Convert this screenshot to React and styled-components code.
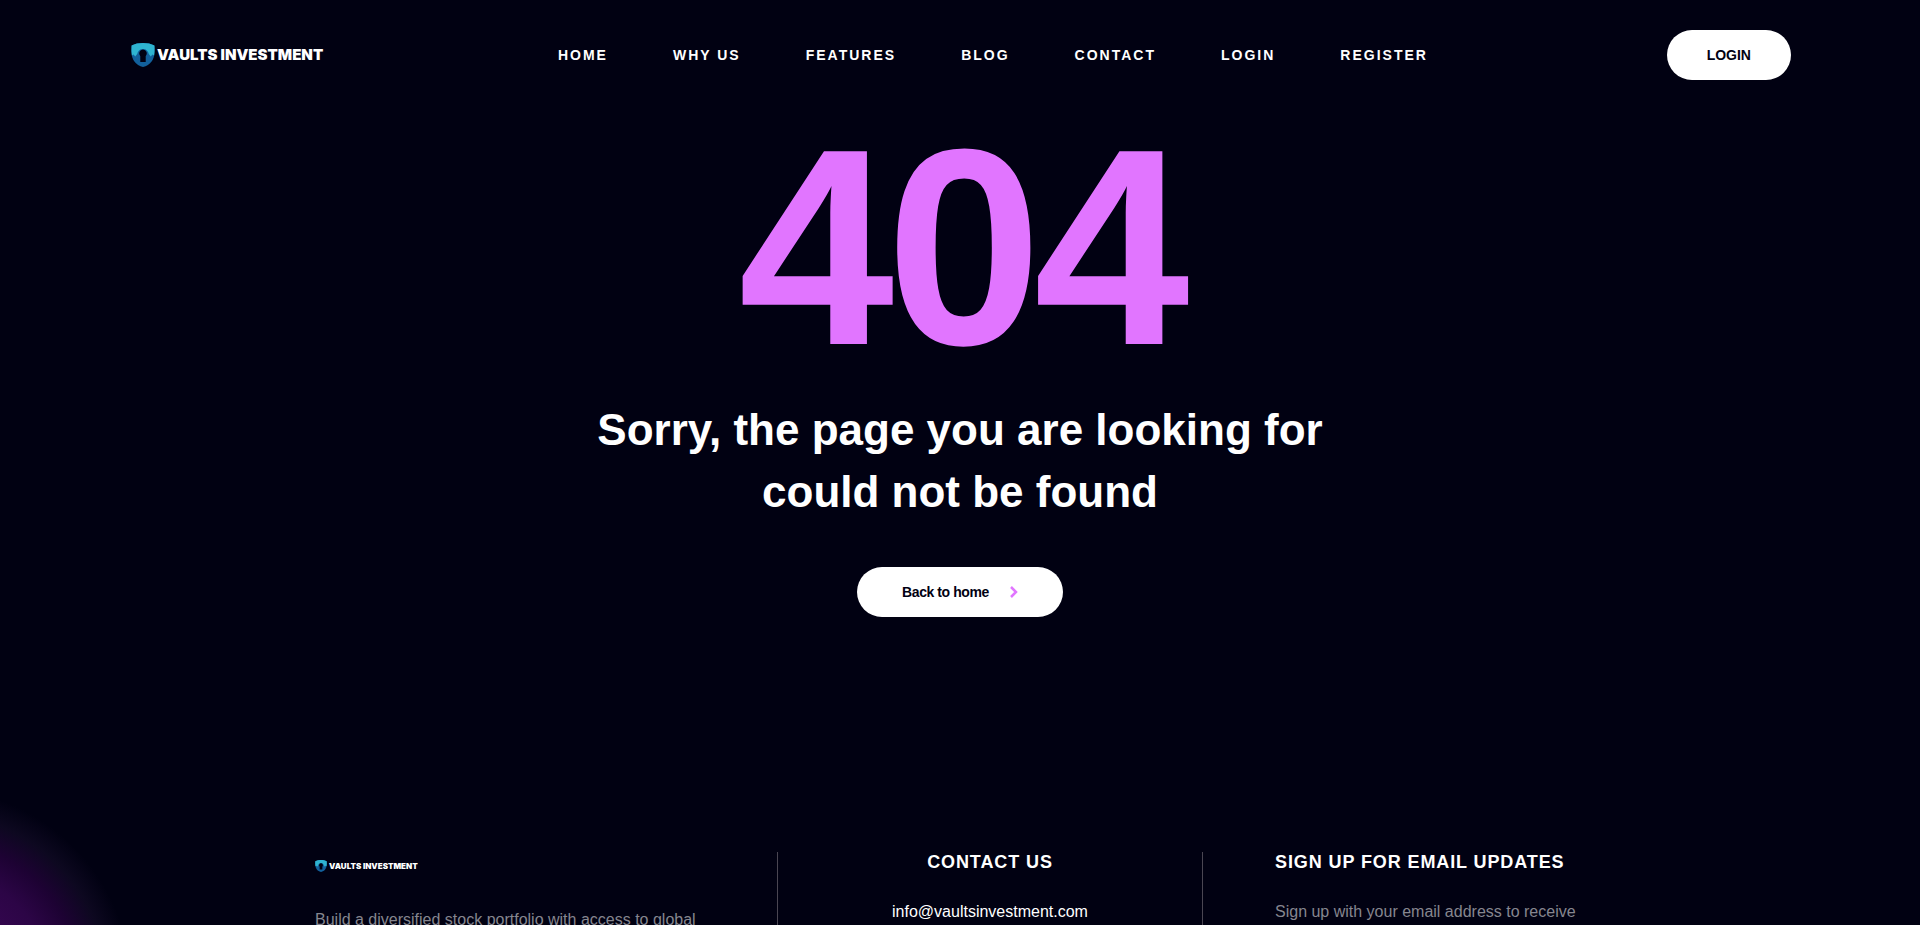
import styled, { createGlobalStyle } from 'styled-components';

const navItems = ['Home', 'Why us', 'Features', 'Blog', 'Contact', 'Login', 'Register'];

const Logo = ({ small }) => (
    <LogoLink href="#home" $small={small}>
        <svg viewBox="0 0 24 24" aria-hidden="true">
            <path d="M12 0C8 0 3.600 .8 .6 2.600C.2 8 .2 14 3 18C5.400 21.400 8.500 23.300 12 24C15.500 23.300 18.600 21.400 21 18C23.800 14 23.800 8 23.400 2.600C20.400 .8 16 0 12 0Z" fill="#12609c" />
            <path d="M12 0C8 0 3.600 .8 .6 2.600C.3 6.200 .4 9.500 .9 12.500L2.600 11.500L4.200 13.500L6.200 11C6.800 8 8.800 6 12 6C15.200 6 17.200 8 17.800 11L19.800 13.500L21.400 11.500L23.100 12.500C23.600 9.500 23.700 6.200 23.400 2.600C20.400 .8 16 0 12 0Z" fill="#2fb4d1" />
            <path d="M12 6.500A4 4 0 0 0 9.300 13.300V19H14.700V13.300A4 4 0 0 0 12 6.500Z" fill="#010112" />
        </svg>
        <span>VAULTS INVESTMENT</span>
    </LogoLink>
)

const Header = () => (
    <HeaderWrapper>
        <Logo />
        <Nav>
            {navItems.map((item) => (
                <NavLink key={item} href={`#${item.replace(' ', '-').toLowerCase()}`}>{item}</NavLink>
            ))}
        </Nav>
        <LoginButton type="button">LOGIN</LoginButton>
    </HeaderWrapper>
)

const NotFound = () => (
    <Hero>
        <ErrorCode>404</ErrorCode>
        <Message>Sorry, the page you are looking for could not be found</Message>
        <HomeLink href="#home">
            Back to home
            <svg width="8" height="12" viewBox="0 0 8 12" fill="none" aria-hidden="true">
                <path d="M1 1L6 6L1 11" stroke="#e175ff" strokeWidth="2.500" />
            </svg>
        </HomeLink>
    </Hero>
)

const Footer = () => (
    <FooterWrapper>
        <Columns>
            <About>
                <Logo small />
                <Text>Build a diversified stock portfolio with access to global</Text>
            </About>
            <Contact>
                <Title>Contact us</Title>
                <MailLink href="mailto:info@vaultsinvestment.com">info@vaultsinvestment.com</MailLink>
            </Contact>
            <SignUp>
                <Title>Sign up for email updates</Title>
                <Text>Sign up with your email address to receive</Text>
            </SignUp>
        </Columns>
    </FooterWrapper>
)

const App = () => {
    return (
        <>
            <GlobalStyle />
            <Header />
            <NotFound />
            <Footer />
        </>
    )
}

export default App


//Styled components
const GlobalStyle = createGlobalStyle`
    *, *::before, *::after {
        box-sizing: border-box;
    }

    body {
        margin: 0;
        background: #010112;
        color: #fff;
        font-family: "Liberation Sans", Arial, sans-serif;
        font-size: 16px;
        line-height: 28px;
    }

    h1, h2, h3, p {
        margin: 0;
    }

    a {
        color: inherit;
        text-decoration: none;
    }
`

const LogoLink = styled.a`
    display: inline-flex;
    align-items: center;
    gap: 2px;
    font-family: Inter, sans-serif;
    font-size: ${({ $small }) => ($small ? '8px' : '15px')};
    font-weight: 900;
    line-height: ${({ $small }) => ($small ? '12px' : '24px')};
    white-space: nowrap;

    svg {
        width: ${({ $small }) => ($small ? '12px' : '24px')};
        height: ${({ $small }) => ($small ? '12px' : '24px')};
    }
`

const HeaderWrapper = styled.header`
    display: flex;
    align-items: center;
    justify-content: space-between;
    padding: 30px 129px 0 131px;
`

const Nav = styled.nav`
    display: flex;
    gap: 65px;
    padding-right: 4px;
`

const NavLink = styled.a`
    font-size: 14px;
    font-weight: 700;
    letter-spacing: 2px;
    text-transform: uppercase;
`

const LoginButton = styled.button`
    height: 50px;
    padding: 0 40px;
    border: 0;
    border-radius: 25px;
    background: #fff;
    color: #010112;
    font: inherit;
    font-size: 14px;
    font-weight: 700;
    cursor: pointer;
`

const Hero = styled.main`
    display: flex;
    flex-direction: column;
    align-items: center;
    padding: 27px 20px 160px;
    text-align: center;
`

const ErrorCode = styled.h1`
    color: #e175ff;
    font-size: 280px;
    line-height: 280px;
    letter-spacing: -8px;
`

const Message = styled.h2`
    max-width: 780px;
    margin: 12px 0 44px;
    font-size: 44px;
    line-height: 62px;
`

const HomeLink = styled.a`
    display: inline-flex;
    align-items: center;
    gap: 21px;
    height: 50px;
    padding: 0 45px;
    border-radius: 25px;
    background: #fff;
    color: #010112;
    font-size: 14px;
    font-weight: 700;
    letter-spacing: -0.03em;
`

const FooterWrapper = styled.footer`
    padding: 75px 20px 40px;
    background: radial-gradient(
        circle at -65px 208px,
        #34064f 80px,
        #2c0546 115px,
        #1d0233 145px,
        #0d0820 172px,
        #010112 196px
    );
`

const Columns = styled.div`
    display: grid;
    grid-template-columns: 463px 425px 1fr;
    max-width: 1290px;
    margin: 0 auto;
`

const About = styled.div`
    display: flex;
    flex-direction: column;
    align-items: flex-start;
    gap: 34px;
    padding-top: 8px;
    border-right: 1px solid #4a4652;
`

const Contact = styled.div`
    border-right: 1px solid #4a4652;
    text-align: center;
`

const SignUp = styled.div`
    padding-left: 72px;
`

const Title = styled.h3`
    margin-bottom: 26px;
    font-size: 18px;
    line-height: 20px;
    letter-spacing: 0.05em;
    text-transform: uppercase;
`

const Text = styled.p`
    color: #86868f;
`

const MailLink = styled.a`
    color: #fff;
`
